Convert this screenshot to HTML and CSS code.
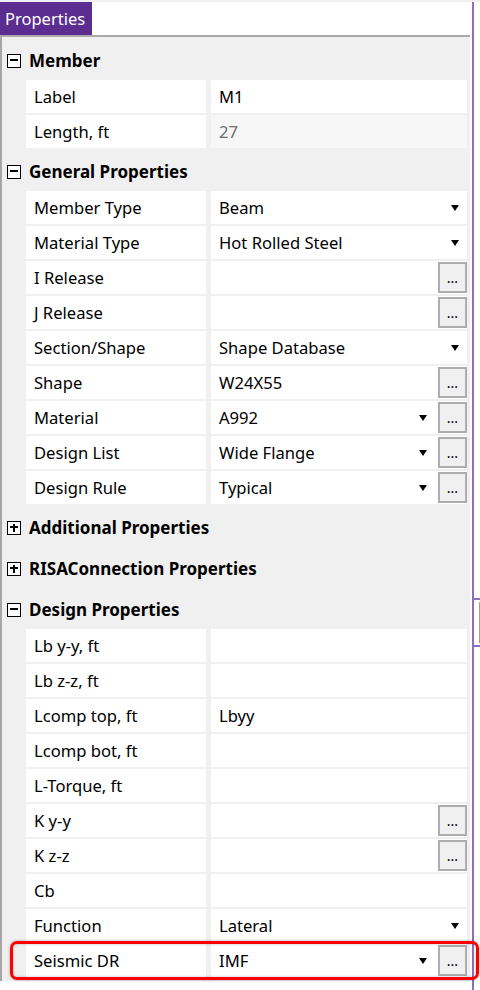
FILE: index.html
```html
<!DOCTYPE html>
<html>
<head>
<meta charset="utf-8">
<link rel="stylesheet" href="styles.css">
</head>
<body>
<div class="topstrip"></div>
<div class="frame">
  <div class="tabbar"><div class="tab">Properties</div></div>
  <div class="tabline"></div>
  <div class="panel">
    <div class="hdr"><span class="box minus"></span><span class="htext">Member</span></div>
    <div class="row"><div class="lab">Label</div><div class="val">M1</div></div>
    <div class="row"><div class="lab">Length, ft</div><div class="val dis">27</div></div>

    <div class="hdr"><span class="box minus"></span><span class="htext">General Properties</span></div>
    <div class="row"><div class="lab">Member Type</div><div class="val"><span class="vt">Beam</span><span class="arr"></span></div></div>
    <div class="row"><div class="lab">Material Type</div><div class="val"><span class="vt">Hot Rolled Steel</span><span class="arr"></span></div></div>
    <div class="row"><div class="lab">I Release</div><div class="val"><span class="vt"></span><span class="btn">...</span></div></div>
    <div class="row"><div class="lab">J Release</div><div class="val"><span class="vt"></span><span class="btn">...</span></div></div>
    <div class="row"><div class="lab">Section/Shape</div><div class="val"><span class="vt">Shape Database</span><span class="arr"></span></div></div>
    <div class="row"><div class="lab">Shape</div><div class="val"><span class="vt">W24X55</span><span class="btn">...</span></div></div>
    <div class="row"><div class="lab">Material</div><div class="val"><span class="vt">A992</span><span class="arr wb"></span><span class="btn">...</span></div></div>
    <div class="row"><div class="lab">Design List</div><div class="val"><span class="vt">Wide Flange</span><span class="arr wb"></span><span class="btn">...</span></div></div>
    <div class="row"><div class="lab">Design Rule</div><div class="val"><span class="vt">Typical</span><span class="arr wb"></span><span class="btn">...</span></div></div>

    <div class="hdr"><span class="box plus"></span><span class="htext">Additional Properties</span></div>
    <div class="hdr"><span class="box plus"></span><span class="htext">RISAConnection Properties</span></div>
    <div class="hdr"><span class="box minus"></span><span class="htext">Design Properties</span></div>
    <div class="row"><div class="lab">Lb y-y, ft</div><div class="val"></div></div>
    <div class="row"><div class="lab">Lb z-z, ft</div><div class="val"></div></div>
    <div class="row"><div class="lab">Lcomp top, ft</div><div class="val">Lbyy</div></div>
    <div class="row"><div class="lab">Lcomp bot, ft</div><div class="val"></div></div>
    <div class="row"><div class="lab">L-Torque, ft</div><div class="val"></div></div>
    <div class="row"><div class="lab">K y-y</div><div class="val"><span class="vt"></span><span class="btn">...</span></div></div>
    <div class="row"><div class="lab">K z-z</div><div class="val"><span class="vt"></span><span class="btn">...</span></div></div>
    <div class="row"><div class="lab">Cb</div><div class="val"></div></div>
    <div class="row"><div class="lab">Function</div><div class="val"><span class="vt">Lateral</span><span class="arr"></span></div></div>
    <div class="row hl"><div class="lab">Seismic DR</div><div class="val"><span class="vt">IMF</span><span class="arr wb"></span><span class="btn">...</span></div><div class="redbox"></div></div>
  </div>
  <div class="splitter"></div>
</div>
</body>
</html>
```

FILE: styles.css
```css
html, body {
  margin: 0;
  padding: 0;
  background: #ffffff;
  font-family: "Noto Sans", "Open Sans", sans-serif;
  color: #000;
}
.topstrip {
  height: 2px;
  background: #f0f0f0;
}
.frame {
  position: relative;
  width: 472px;
  height: 988px;
  border-right: 2px solid #8b70bf;
}
.tabbar {
  height: 33px;
  display: flex;
}
.tab {
  width: 92px;
  height: 33px;
  background: #5b2d90;
  color: #fff;
  font-size: 16.5px;
  line-height: 33px;
  padding-left: 5px;
  box-sizing: border-box;
}
.tabline {
  width: 470px;
  height: 2px;
  background: #a9a9ae;
}
.panel {
  width: 470px;
  box-sizing: border-box;
  border-left: 2px solid #a6a6a6;
  background: #f0f0f0;
  padding: 0 3px 2px 0;
  height: 944px;
}
.hdr {
  height: 41px;
  display: flex;
  align-items: center;
  padding-top: 6px;
  box-sizing: border-box;
}
.box {
  width: 14px;
  height: 14px;
  box-sizing: border-box;
  border: 1.5px solid #000;
  margin-left: 5px;
  margin-right: 8px;
  position: relative;
  background: #fff;
  flex: none;
}
.box::before {
  content: "";
  position: absolute;
  left: 2px;
  right: 2px;
  top: 4.5px;
  height: 2px;
  background: #000;
}
.box.plus::after {
  content: "";
  position: absolute;
  top: 2px;
  bottom: 2px;
  left: 4.5px;
  width: 2px;
  background: #000;
}
.htext {
  font-weight: bold;
  font-size: 17px;
}
.row {
  position: relative;
  display: flex;
  height: 33px;
  margin: 2px 0 0 24px;
  column-gap: 5px;
  font-size: 16.6px;
}
.row:first-of-type { margin-top: 0; }
.lab, .val {
  background: #fff;
  display: flex;
  align-items: center;
  padding-left: 8px;
  box-sizing: border-box;
}
.lab {
  width: 180px;
  flex: none;
}
.val {
  flex: 1;
}
.val.dis {
  background: #f7f7f7;
  color: #6d6d6d;
}
.vt {
  flex: 1;
}
.arr {
  width: 0;
  height: 0;
  border-left: 4px solid transparent;
  border-right: 4px solid transparent;
  border-top: 6px solid #000;
  margin-right: 8px;
  margin-top: 1px;
}
.arr.wb {
  margin-right: 11px;
}
.btn {
  width: 29px;
  height: 31px;
  box-sizing: border-box;
  border: 2px solid #adadad;
  background: #f0f0f0;
  font-size: 14px;
  text-align: center;
  line-height: 28px;
  align-self: flex-start;
  margin-top: 1px;
  flex: none;
}
.redbox {
  position: absolute;
  left: -16px;
  top: -3px;
  width: 469px;
  height: 39px;
  box-sizing: border-box;
  border: 3px solid #ff0000;
  border-radius: 7px;
  box-shadow: 0 0 3px rgba(0,0,0,0.35), inset 0 0 3px rgba(0,0,0,0.25);
}
.splitter {
  position: absolute;
  right: -8px;
  top: 596px;
  width: 6px;
  height: 45px;
  border-top: 2px solid #8b70bf;
  border-bottom: 2px solid #8b70bf;
}
.splitter::after {
  content: "";
  position: absolute;
  right: 0;
  top: 2px;
  bottom: 2px;
  width: 1px;
  background: #a0a0a0;
}
```
